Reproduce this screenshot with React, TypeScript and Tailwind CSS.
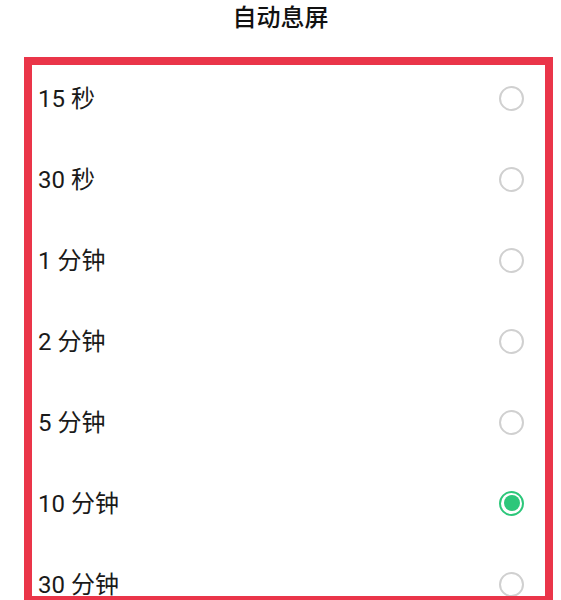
import React from "react";

const items = ["15 秒", "30 秒", "1 分钟", "2 分钟", "5 分钟", "10 分钟", "30 分钟"];
const selected = 5;

export default function App() {
  return (
    <div
      className="w-[561px] h-[600px] bg-white overflow-hidden"
      style={{ fontFamily: 'Roboto, "Noto Sans CJK SC", "Noto Sans", sans-serif' }}
    >
      <div className="h-[36px] flex items-center justify-center text-[24px] font-medium text-[#111]">
        自动息屏
      </div>
      <div className="mt-[21px] ml-[24px] w-[529px] h-[547px] border-[8px] border-[#ea3549] overflow-hidden">
        <div className="-mt-[7.5px]">
          {items.map((t, i) => (
            <div key={t} className="h-[81px] flex items-center justify-between pl-[6px] pr-[21px]">
              <span className="text-[24px] text-[#1a1a1a] leading-none pt-[2px]">{t}</span>
              {i === selected ? (
                <span className="w-[25px] h-[25px] rounded-full border-[2px] border-[#2cc77a] flex items-center justify-center">
                  <span className="w-[16px] h-[16px] rounded-full bg-[#2cc77a]" />
                </span>
              ) : (
                <span className="w-[25px] h-[25px] rounded-full border-[2px] border-[#d0d0d0]" />
              )}
            </div>
          ))}
        </div>
      </div>
    </div>
  );
}
